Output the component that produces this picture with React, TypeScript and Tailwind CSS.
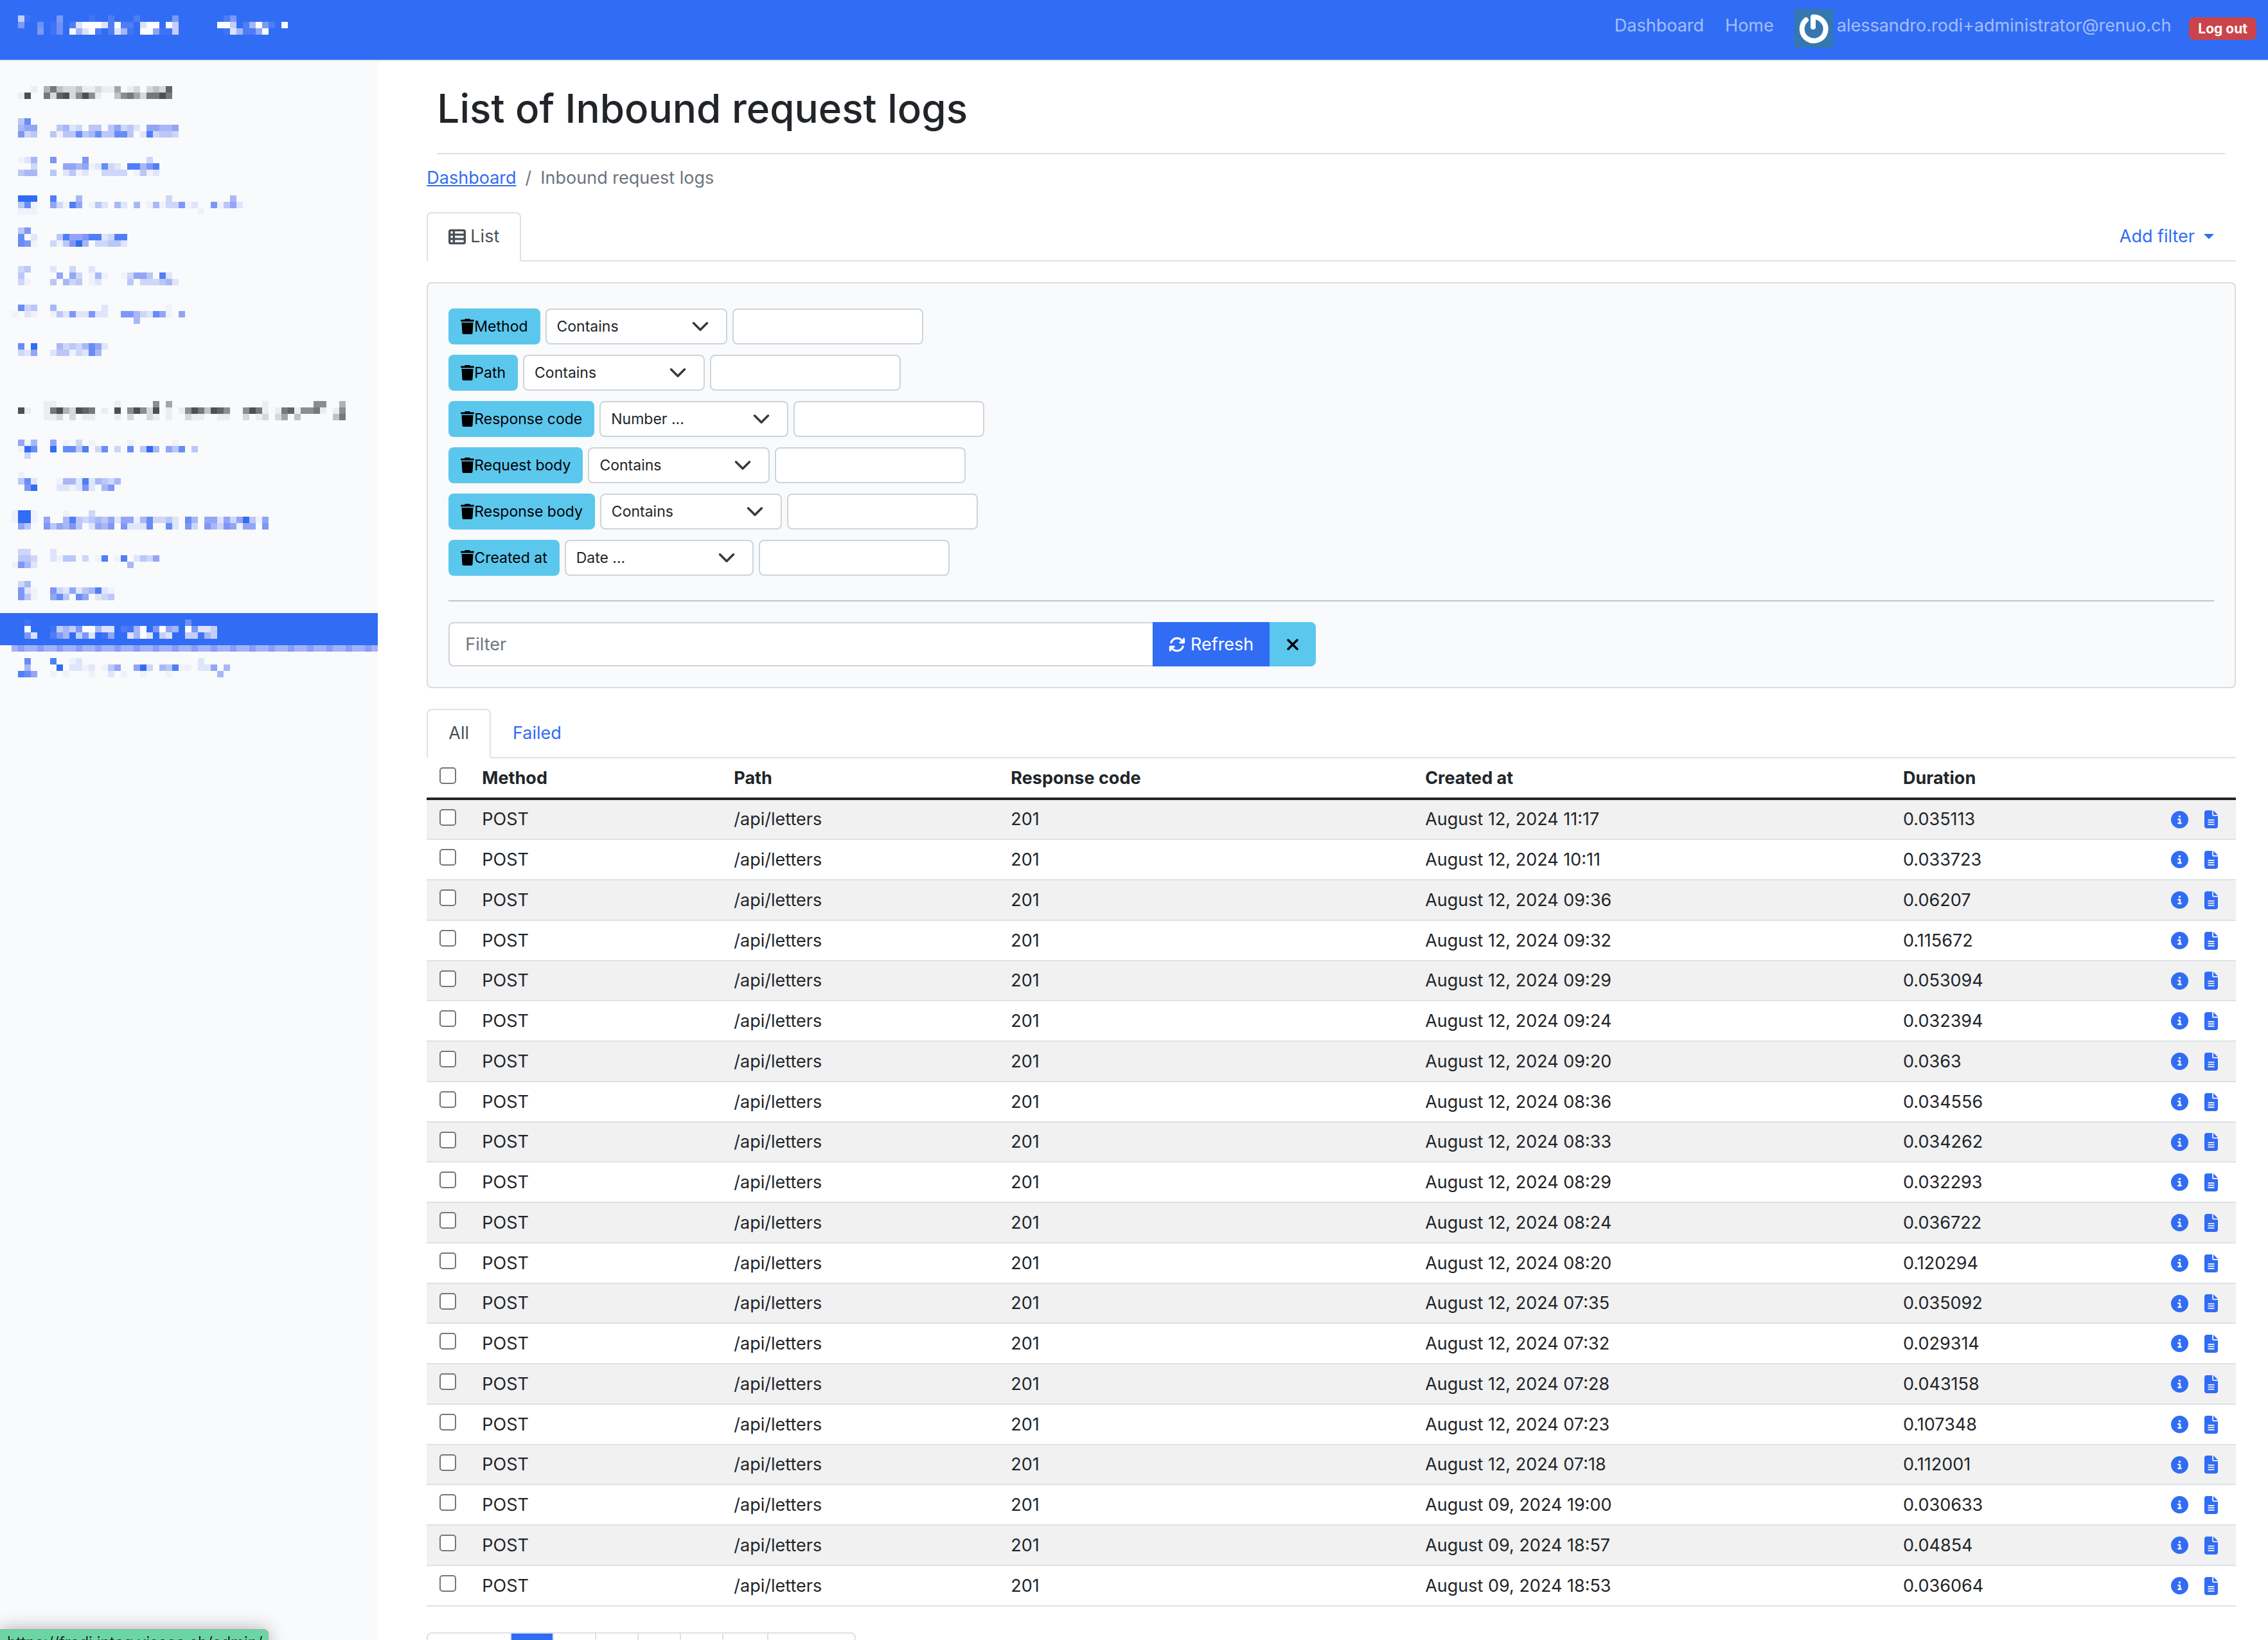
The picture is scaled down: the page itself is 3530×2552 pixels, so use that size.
import { FaArrowsRotate, FaCircleInfo, FaFileLines, FaTableList, FaTrash, FaXmark } from "react-icons/fa6";

const BLUES: Record<string, string> = {
  a: "#eff2fb",
  b: "#dfe5fa",
  c: "#cdd7f9",
  d: "#bac7f8",
  e: "#a8b8f7",
  f: "#92a5f7",
  g: "#7f96f6",
  h: "#678cf7",
  i: "#4e7ff6",
  j: "#316cf4",
};
const GREYS: Record<string, string> = {
  "1": "#ecedef",
  "2": "#d6d8da",
  "3": "#c0c2c4",
  "4": "#b0b3b6",
  "5": "#a3a5a8",
  "6": "#8a8d91",
  "7": "#75787d",
  "8": "#5f6469",
  "9": "#4b5057",
};
const WHITES: Record<string, string> = {
  "1": "#4073f4",
  "2": "#4f7cf5",
  "3": "#6f90f7",
  "4": "#7b99f7",
  "5": "#8fa5f8",
  "6": "#a5b5f9",
  "7": "#c3cefb",
  "8": "#dbe2fc",
  "9": "#fbfcff",
};

type MosaicProps = { rows: string[]; palette: Record<string, string>; label: string };

/* Each row is a list of "column:shades" runs on a 10px grid. */
function Mosaic({ rows, palette, label }: MosaicProps) {
  return (
    <svg
      role="img"
      aria-label={label}
      width="580"
      height={rows.length * 10}
      viewBox={`0 0 580 ${rows.length * 10}`}
      shapeRendering="crispEdges"
      className="block"
    >
      {rows.flatMap((row, y) =>
        row.split(" ").flatMap((run) => {
          const [start, shades = ""] = run.split(":");
          return shades.split("").map((shade, i) =>
            palette[shade] ? (
              <rect
                key={`${y}-${start}-${i}`}
                x={28 + (Number(start) + i) * 10}
                y={y * 10}
                width="10"
                height="10"
                fill={palette[shade]}
              />
            ) : null,
          );
        }),
      )}
    </svg>
  );
}

const brand = [
  "0:71 6:4 11:1 14:2 18:2 24:4 32:24",
  "0:4 3:3 5:13 8:2899982922 19:899 23:97 31:997 35:26942 41:9",
  "3:4 5:13 8:96892 14:2861 19:995117 32:186225 38:9",
];

type NavEntry = { height: string; rows: string[]; heading?: boolean; active?: boolean };

const nav: NavEntry[] = [
  {
    height: "h-[50px]",
    heading: true,
    rows: ["2:1 4:47322311211 15:5 17:12 20:2328", "0:19 4:72892696 12:1 15:36752 20:7797"],
  },
  { height: "h-[60px]", rows: ["0:dh", "0:eff 6:debc.dd.dfcdb.ffeef", "0:gcd 5:daddhdehddhhd.bicddc"] },
  { height: "h-[60px]", rows: ["0:abe 5:g 10:g 20:c", "2:c 7:ffefabhcb.iiegi", "0:dee 5:d 7:bdab 13:cccc.adab"] },
  { height: "h-[50px]", rows: ["0:jjj 5:i 9:e 23:c 33:e", "0:dha 5:fcaif.adb.eb.e.aeaccgab..gadfb", "0:aaa 28:a"] },
  { height: "h-[60px]", rows: ["0:dg", "0:h.b 6:diffgiibcii", "0:hga 5:cadgje.ccddb"] },
  { height: "h-[60px]", rows: ["0:cd 5:b 8:c 11:b", "0:d 6:f.fc.aea..acffd.ib", "0:ca 5:d.ecd.ab 17:d.cccdeb"] },
  { height: "h-[60px]", rows: ["0:hcd 5:e 13:b 23:a", "-1:a.ba 5:adbgbbgbb 16:ggecbhfa.f", "18:e"] },
  { height: "h-[90px]", rows: ["0:h.j 6:ecdcehfb", "0:cbf 5:bddacbhe"] },
  {
    height: "h-[60px]",
    heading: true,
    rows: [
      "4:11 15:1 21:6 23:5 38:1 46:66 50:4",
      "0:91 4:17942987 13:1 15:9 17:69629 23:1 25:16973986 35:6971 40:178166 46:71 49:16",
      "4:112.2.11 15:1.2 20:21 23:1 26:211 31:11 35:2.12 40:25.3 49:37",
    ],
  },
  { height: "h-[50px]", rows: ["0:fae 5:f 7:a.c.a 17:a 24:a", "0:ajh 5:j.hhdi.ch.c.h.dje.fdh.d", "1:c"] },
  { height: "h-[60px]", rows: ["0:a", "0:dhb 6:aeebibedce", "1:gj 6:bbabgb.eg"] },
  {
    height: "h-[60px]",
    rows: ["-1:ajja 7:a 11:c", "-1:ajja 4:f..eidcdedfbffaehccdb.he.ffbfcfjdaf", "0:fd 4:gdfegd.bfeg.gbbbh..hb.gc.gecgfaff.g"],
  },
  { height: "h-[50px]", rows: ["0:cc 5:b", "0:ddc 5:badd.c.ai.ai.bdcf", "-1:ageb 17:e"] },
  { height: "h-[50px]", rows: ["0:ce", "0:gba 5:gcbfbdeiba", "0:gda 5:fhd.hf.bcd"] },
  {
    height: "h-[60px]",
    active: true,
    rows: ["1:1 26:3", "1:9 5:1767499688 16:2169.4956 26:94887", "1:48 5:246.748.15 17:8698.78 26:77167"],
  },
  {
    height: "h-[60px]",
    rows: ["1:h 5:i 8:ab 28:b", "1:e 6:j.bbab.adf 18:fjc.ediaa.bbf.e", "0:ihf 5:a.a 11:a 14:b.a 19:a 23:a 31:e"],
  },
];

function Sidebar() {
  return (
    <nav aria-label="Admin sections" className="w-1/6 shrink-0 overflow-hidden bg-[#f9fafb] pt-[39px]">
      <ul>
        {nav.map((entry, i) => {
          const art = (
            <Mosaic
              rows={entry.rows}
              palette={entry.active ? WHITES : entry.heading ? GREYS : BLUES}
              label={`Section ${i + 1}`}
            />
          );
          if (entry.active) {
            return (
              <li key={i} className="mb-[10px] flex h-[60px] flex-col justify-between bg-[#316cf4] pt-[10px]">
                <a href="#section" aria-current="page">
                  {art}
                </a>
                <span className="flex h-[10px] overflow-hidden bg-[#f9fafb] pl-[18px]">
                  {Array.from({ length: 57 }, (_, c) => (
                    <span key={c} className={c % 3 === 1 ? "w-[10px] shrink-0 bg-[#879cf6]" : "w-[10px] shrink-0 bg-[#a3b2f7]"} />
                  ))}
                </span>
              </li>
            );
          }
          return (
            <li key={i} className={entry.height}>
              {entry.heading ? art : <a href="#section">{art}</a>}
            </li>
          );
        })}
      </ul>
    </nav>
  );
}

function Header() {
  return (
    <header className="flex h-[95px] shrink-0 items-center justify-between border-b-2 border-[#dee2e6] bg-[#316cf4] pr-[18px] pb-[5px] text-[27px] leading-[42px] text-white/55">
      <a href="#home" className="pb-[10px]">
        <Mosaic rows={brand} palette={WHITES} label="Administration" />
      </a>
      <div className="flex items-center">
        <a href="#dashboard" className="mr-[33px] pb-2">
          Dashboard
        </a>
        <a href="#home" className="mr-8 pb-2">
          Home
        </a>
        <a href="#account" className="mr-7 flex items-center gap-[6px]">
          <svg aria-hidden="true" viewBox="0 0 60 60" className="size-[60px] bg-[#3577b0]">
            <path
              d="M29 28V12.500A18.500 18.500 0 1 1 18 17"
              fill="none"
              stroke="#fff"
              strokeWidth="8"
              strokeLinecap="round"
              strokeLinejoin="round"
            />
          </svg>
          <span className="pb-2">alessandro.rodi+administrator@renuo.ch</span>
        </a>
        <button type="button" className="h-[35px] rounded-lg bg-[#cb444a] px-[14px] text-[21px] leading-[35px] font-bold text-white">
          Log out
        </button>
      </div>
    </header>
  );
}

const filters = [
  { name: "Method", operator: "Contains" },
  { name: "Path", operator: "Contains" },
  { name: "Response code", operator: "Number ..." },
  { name: "Request body", operator: "Contains" },
  { name: "Response body", operator: "Contains" },
  { name: "Created at", operator: "Date ..." },
];

function FilterRow({ name, operator }: { name: string; operator: string }) {
  return (
    <div className="flex h-14 gap-2 text-[23px]">
      <button type="button" className="flex items-center rounded-lg bg-[#5bc7ed] px-[19px] text-black">
        <FaTrash className="h-6 w-[21px]" />
        {name}
      </button>
      <div className="relative">
        <select
          aria-label={`${name} operator`}
          className={
            operator === "Contains"
              ? "h-14 w-[283px] appearance-none rounded-lg border-2 border-[#ced4da] bg-white pl-4 text-[#212529]"
              : "h-14 w-[294px] appearance-none rounded-lg border-2 border-[#ced4da] bg-white pl-4 text-[#212529]"
          }
        >
          <option>{operator}</option>
        </select>
        <svg aria-hidden="true" viewBox="0 0 16 16" className="pointer-events-none absolute top-[14px] right-7 size-7">
          <path d="m2 5 6 6 6-6" fill="none" stroke="#343a40" strokeWidth="2" strokeLinecap="round" strokeLinejoin="round" />
        </svg>
      </div>
      <input type="text" aria-label={`${name} value`} className="w-[297px] rounded-lg border-2 border-[#ced4da] bg-white px-4" />
    </div>
  );
}

const logs: [string, string][] = [
  ["August 12, 2024 11:17", "0.035113"],
  ["August 12, 2024 10:11", "0.033723"],
  ["August 12, 2024 09:36", "0.06207"],
  ["August 12, 2024 09:32", "0.115672"],
  ["August 12, 2024 09:29", "0.053094"],
  ["August 12, 2024 09:24", "0.032394"],
  ["August 12, 2024 09:20", "0.0363"],
  ["August 12, 2024 08:36", "0.034556"],
  ["August 12, 2024 08:33", "0.034262"],
  ["August 12, 2024 08:29", "0.032293"],
  ["August 12, 2024 08:24", "0.036722"],
  ["August 12, 2024 08:20", "0.120294"],
  ["August 12, 2024 07:35", "0.035092"],
  ["August 12, 2024 07:32", "0.029314"],
  ["August 12, 2024 07:28", "0.043158"],
  ["August 12, 2024 07:23", "0.107348"],
  ["August 12, 2024 07:18", "0.112001"],
  ["August 09, 2024 19:00", "0.030633"],
  ["August 09, 2024 18:57", "0.04854"],
  ["August 09, 2024 18:53", "0.036064"],
];

const checkbox = "block size-[26px] appearance-none rounded-[5px] border-2 border-[#767676] bg-white";
const th = "border-b-4 border-[#212529] px-[14px] text-left font-bold";
const td = "border-b-2 border-[#dee2e6] px-[14px]";

function LogTable() {
  return (
    <table className="w-full table-fixed border-separate border-spacing-0">
      <colgroup>
        <col className="w-[72px]" />
        <col className="w-[13.920%]" />
        <col className="w-[15.310%]" />
        <col className="w-[22.900%]" />
        <col className="w-[26.420%]" />
        <col />
        <col className="w-[140px]" />
      </colgroup>
      <thead>
        <tr className="h-[65px]">
          <th className="border-b-4 border-[#212529] pt-[14px] pl-5 align-top">
            <input type="checkbox" aria-label="Select all" className={checkbox} />
          </th>
          <th className={th}>Method</th>
          <th className={th}>Path</th>
          <th className={th}>Response code</th>
          <th className={th}>Created at</th>
          <th className={th}>Duration</th>
          <th className={th} aria-label="Actions" />
        </tr>
      </thead>
      <tbody>
        {logs.map(([createdAt, duration]) => (
          <tr key={createdAt} className="h-[63px] odd:bg-[#f1f1f1] nth-[4n+1]:h-[62px]">
            <td className="border-b-2 border-[#dee2e6] pt-[14px] pl-5 align-top">
              <input type="checkbox" aria-label={`Select ${createdAt}`} className={checkbox} />
            </td>
            <td className={td}>POST</td>
            <td className={td}>/api/letters</td>
            <td className={td}>201</td>
            <td className={td}>{createdAt}</td>
            <td className={td}>{duration}</td>
            <td className="border-b-2 border-[#dee2e6] pr-7">
              <div className="flex items-center justify-end gap-[25px] text-[#316cf4]">
                <a href="#show" aria-label="Show">
                  <FaCircleInfo className="size-[27px]" />
                </a>
                <a href="#details" aria-label="Details">
                  <FaFileLines className="h-7 w-[21px]" />
                </a>
              </div>
            </td>
          </tr>
        ))}
      </tbody>
    </table>
  );
}

const activeTab = "-mb-[2px] rounded-t-lg border-2 border-[#dee2e6] border-b-white bg-white pt-[15px] pb-4 text-[#495057]";

export default function App() {
  return (
    <div className="flex h-screen flex-col overflow-hidden bg-white font-[Inter,sans-serif] text-[27px] leading-[42px] text-[#212529]">
      <Header />
      <div className="flex min-h-0 grow">
        <Sidebar />
        <main className="min-w-0 grow pr-[50px] pl-[76px]">
          <h1 className="mx-4 border-b-2 border-[#dee2e6] pt-9 pb-8 text-[62px] leading-[75px] font-medium">List of Inbound request logs</h1>

          <nav aria-label="Breadcrumb" className="mt-4 flex gap-[14px] text-[#6c757d]">
            <a href="#dashboard" className="text-[#316cf4] underline">
              Dashboard
            </a>
            <span>/</span>
            <span>Inbound request logs</span>
          </nav>

          <div className="mt-8 flex justify-between border-b-2 border-[#dee2e6]">
            <a href="#list" className={`${activeTab} flex items-center gap-[7px] px-8`}>
              <FaTableList className="size-[27px]" />
              List
            </a>
            <button type="button" className="flex items-center gap-[14px] pr-[34px] text-[#316cf4]">
              Add filter
              <svg aria-hidden="true" viewBox="0 0 16 8" className="h-2 w-4">
                <path d="M0 0h16L8 8z" fill="currentColor" />
              </svg>
            </button>
          </div>

          <form className="mt-8 rounded-lg border-2 border-[#d9dbde] bg-[#f9fafb] px-8 pt-[39px] pb-8" onSubmit={(e) => e.preventDefault()}>
            <div className="flex flex-col gap-4">
              {filters.map((f) => (
                <FilterRow key={f.name} {...f} />
              ))}
            </div>
            <hr className="mt-[38px] border-t-2 border-[#c1c4c6]" />
            <div className="mt-8 flex h-[69px] w-1/2 max-w-[1350px]">
              <input
                type="text"
                aria-label="Filter"
                placeholder="Filter"
                className="min-w-0 grow rounded-l-lg border-2 border-r-0 border-[#ced4da] bg-white px-6 placeholder:text-[#6c757d]"
              />
              <button type="submit" className="flex items-center gap-2 bg-[#316cf4] px-[25px] text-white">
                <FaArrowsRotate className="size-[26px]" />
                Refresh
              </button>
              <button type="button" aria-label="Clear filter" className="flex w-[72px] items-center justify-center rounded-r-lg bg-[#5bc7ed] text-black">
                <FaXmark className="size-7" />
              </button>
            </div>
          </form>

          <div className="mt-8 flex border-b-2 border-[#dee2e6]">
            <a href="#all" className={`${activeTab} px-8`}>
              All
            </a>
            <a href="#failed" className="px-[34px] pt-[17px] pb-4 text-[#316cf4]">
              Failed
            </a>
          </div>

          <LogTable />

          <div className="mt-10 flex h-[68px] w-[668px] divide-x-2 divide-[#dee2e6] overflow-hidden rounded-lg border-2 border-[#dee2e6]">
            <button type="button" aria-label="Previous page" className="w-[130px]" />
            <button type="button" aria-label="Page 1" aria-current="page" className="-mt-[2px] w-[66px] bg-[#316cf4]" />
            <button type="button" aria-label="Page 2" className="w-[66px]" />
            <button type="button" aria-label="Page 3" className="w-[66px]" />
            <button type="button" aria-label="Page 4" className="w-[66px]" />
            <button type="button" aria-label="Page 5" className="w-[66px]" />
            <button type="button" aria-label="Next page" className="w-[70px]" />
            <button type="button" aria-label="Last page" className="grow" />
          </div>
        </main>
      </div>
      <div className="fixed -bottom-6 left-0 w-[418px] rounded-tr-lg border-t border-r border-[#a9a9a9] bg-[#6bd5a4] pl-[11px] text-[24px] leading-[40px] whitespace-nowrap text-[#212529] shadow-[0_0_28px_rgba(0,0,0,0.3)]">
        https://fredi.integ.viseca.ch/admin/
      </div>
    </div>
  );
}
